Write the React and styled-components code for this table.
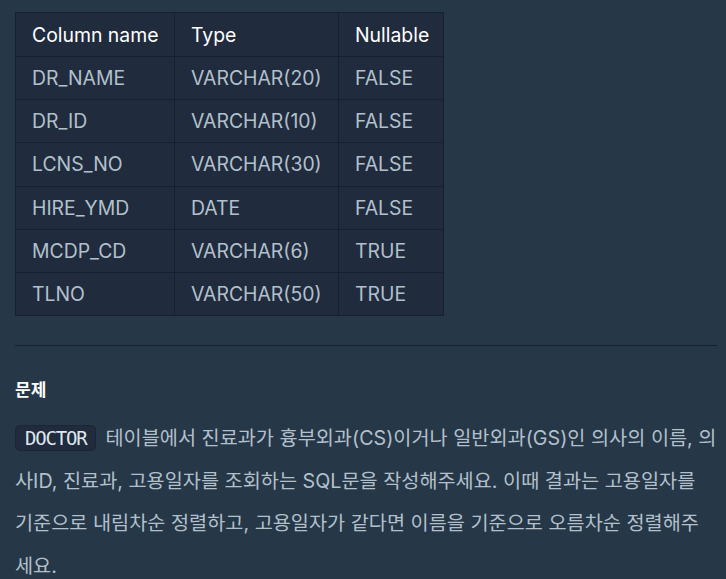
import styled, { createGlobalStyle } from 'styled-components';

const GlobalStyle = createGlobalStyle`
  html, body {
    margin: 0;
    padding: 0;
    background-color: #263747;
  }
  body {
    font-family: Inter, "Noto Sans CJK KR", sans-serif;
  }
`;

const Page = styled.div`
  padding: 12px 9px 0 15px;
  min-height: 579px;
  box-sizing: border-box;
  color: #b2c0cc;
`;

const Table = styled.table`
  border-collapse: collapse;
  table-layout: fixed;
  width: 428px;
  background-color: #202b3d;
  border: 1px solid #172030;
  font-size: 19.4px;
`;

const Col = styled.col`
  width: ${(p) => p.$w}px;
`;

const HeadCell = styled.th`
  text-align: left;
  font-weight: 400;
  color: #ffffff;
  height: 44px;
  padding: 0 16px;
  white-space: nowrap;
  border: 1px solid #172030;
  box-sizing: border-box;
`;

const Cell = styled.td`
  height: 43.2px;
  padding: 0 16px;
  white-space: nowrap;
  border: 1px solid #172030;
  box-sizing: border-box;
`;

const Rule = styled.hr`
  border: none;
  border-top: 1px solid #172030;
  margin: 29px 0 0;
`;

const Title = styled.h3`
  margin: 30px 0 0;
  font-size: 17px;
  font-weight: 600;
  color: #ffffff;
  font-family: "Noto Sans CJK KR", sans-serif;
`;

const Text = styled.p`
  margin: 16px 0 0;
  font-size: 19.7px;
  line-height: 42.6px;
  word-break: break-all;
  font-family: Inter, "Noto Sans CJK KR", sans-serif;
`;

const Code = styled.code`
  font-family: "DejaVu Sans Mono", monospace;
  font-size: 19px;
  letter-spacing: -1.2px;
  color: #dfe6ec;
  background-color: #202b3d;
  border: 1px solid #1b2535;
  border-radius: 5px;
  padding: 1px 9px;
  margin-right: 9px;
`;

const rows = [
  ['DR_NAME', 'VARCHAR(20)', 'FALSE'],
  ['DR_ID', 'VARCHAR(10)', 'FALSE'],
  ['LCNS_NO', 'VARCHAR(30)', 'FALSE'],
  ['HIRE_YMD', 'DATE', 'FALSE'],
  ['MCDP_CD', 'VARCHAR(6)', 'TRUE'],
  ['TLNO', 'VARCHAR(50)', 'TRUE'],
];

export default function App() {
  return (
    <>
      <GlobalStyle />
      <Page>
        <Table>
          <colgroup>
            <Col $w={159} />
            <Col $w={164} />
            <Col $w={105} />
          </colgroup>
          <thead>
            <tr>
              <HeadCell>Column name</HeadCell>
              <HeadCell>Type</HeadCell>
              <HeadCell>Nullable</HeadCell>
            </tr>
          </thead>
          <tbody>
            {rows.map((r) => (
              <tr key={r[0]}>
                <Cell>{r[0]}</Cell>
                <Cell>{r[1]}</Cell>
                <Cell>{r[2]}</Cell>
              </tr>
            ))}
          </tbody>
        </Table>
        <Rule />
        <Title>문제</Title>
        <Text>
          <Code>DOCTOR</Code>테이블에서 진료과가 흉부외과(CS)이거나 일반외과(GS)인 의사의 이름, 의사ID, 진료과,
          고용일자를 조회하는 SQL문을 작성해주세요. 이때 결과는 고용일자를 기준으로 내림차순 정렬하고,
          고용일자가 같다면 이름을 기준으로 오름차순 정렬해주세요.
        </Text>
      </Page>
    </>
  );
}
